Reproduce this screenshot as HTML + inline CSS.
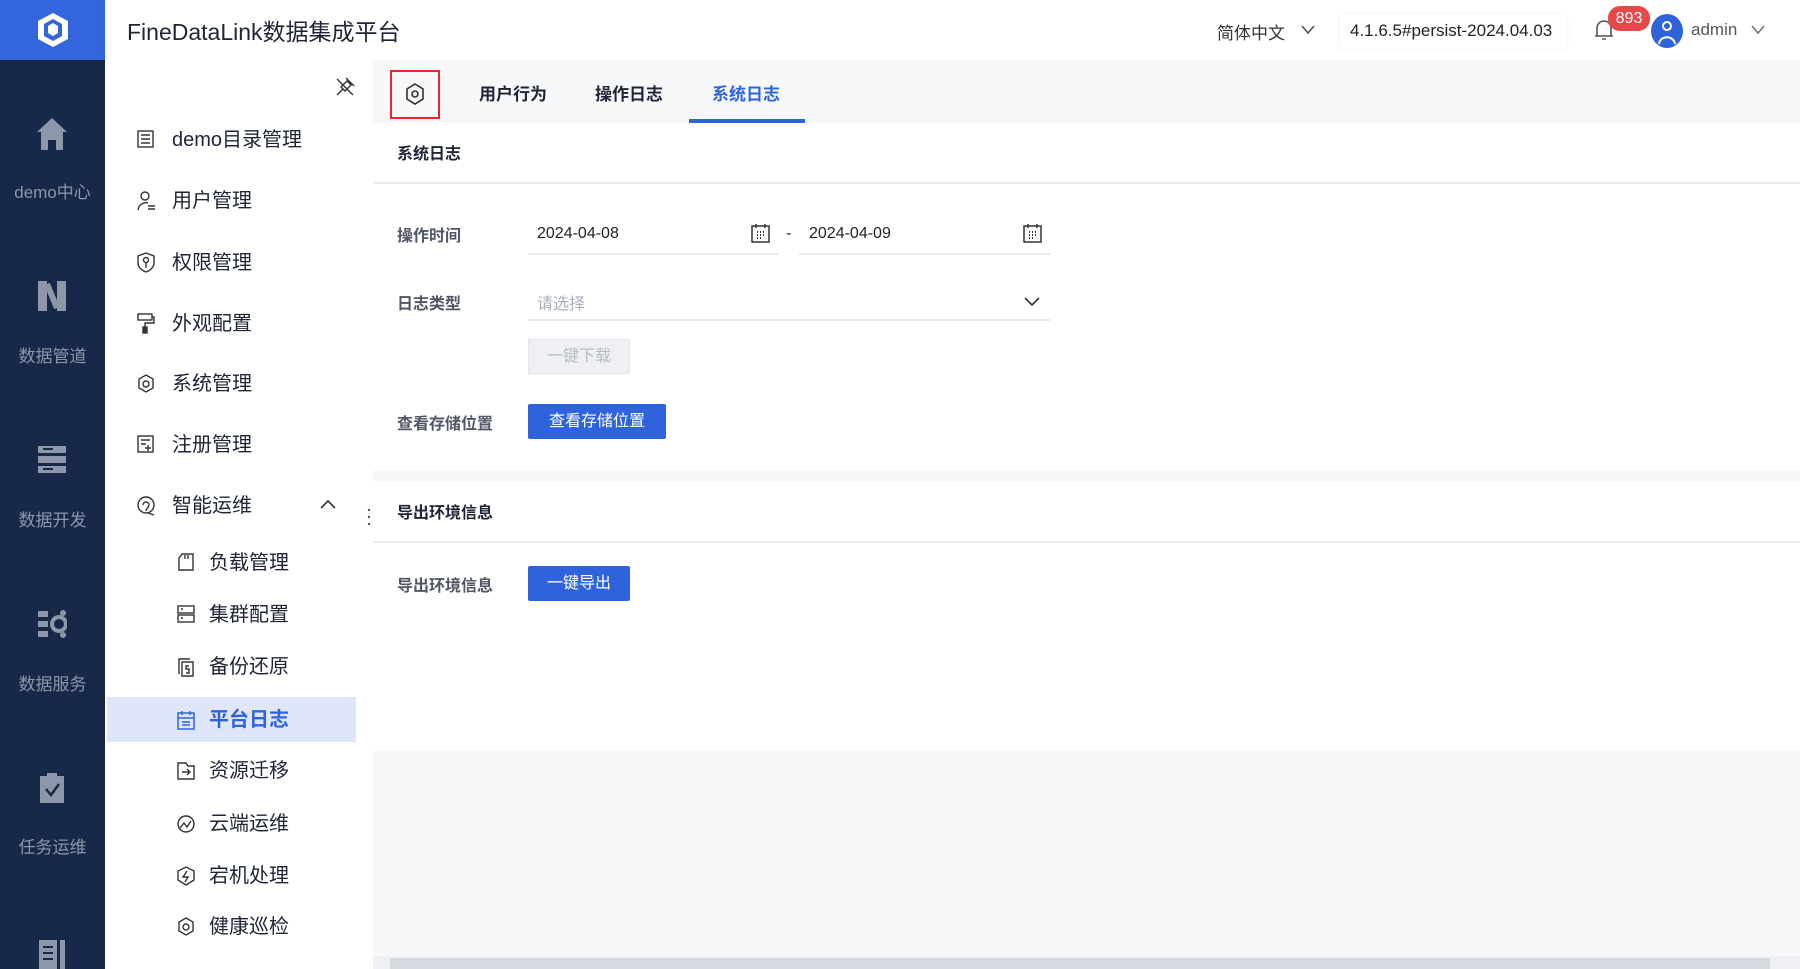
<!DOCTYPE html>
<html><head><meta charset="utf-8"><style>
*{margin:0;padding:0;box-sizing:border-box}
body{width:1800px;height:969px;overflow:hidden;background:#f7f8fa;font-family:"Liberation Sans","Noto Sans CJK SC",sans-serif;position:relative;color:#1d2536}
.abs{position:absolute}
.side{left:0;top:0;width:105px;height:969px;background:#172849}
.logo{left:0;top:0;width:105px;height:60px;background:#3366dd;display:flex;align-items:center;justify-content:center}
.hdr{left:105px;top:0;width:1695px;height:60px;background:#fff;box-shadow:0 2px 4px rgba(0,0,0,.04)}
.nl{color:#8d96a8;font-size:17px;width:105px;text-align:center}
.nav2{left:105px;top:60px;width:268px;height:909px;background:#fff}
.it{font-size:20px;color:#1d2536;line-height:24px}
.tabs{left:373px;top:60px;width:1427px;height:63px;background:#f7f8fa}
.tab{font-size:17px;font-weight:bold;top:80px}
.lbl{font-size:16px;color:#4f5666;font-weight:bold}
.ttl{font-size:16px;font-weight:bold;color:#1d2536}
.btn{background:#2f63dc;color:#fff;font-size:16px;text-align:center;border-radius:2px}
</style></head><body>
<div class="abs side"></div>
<div class="abs logo"><svg width="36" height="38" viewBox="0 0 36 38"><path d="M18 2 L33 10 V28 L18 36 L3 28 V10Z" fill="#fff"/><path d="M18 8 L27 13 V25 L18 30 L9 25 V13Z" fill="#3366dd"/><path d="M18 12 L23 15 V22 L18 25 L13 22 V15Z" fill="#fff"/></svg></div>
<svg class="abs" style="left:36px;top:116px" width="32" height="36" viewBox="0 0 32 36"><path d="M16 2 L31 16 H27 V34 H20 V24 H12 V34 H5 V16 H1Z" fill="#8e97a9"/></svg>
<div class="abs nl" style="top:178px">demo中心</div>
<svg class="abs" style="left:37px;top:280px" width="30" height="32"><rect x="1" y="1" width="9" height="30" fill="#8e97a9"/><rect x="20" y="1" width="9" height="30" fill="#8e97a9"/><path d="M10 4 L20 28" stroke="#8e97a9" stroke-width="6"/></svg>
<div class="abs nl" style="top:342px">数据管道</div>
<svg class="abs" style="left:37px;top:445px" width="30" height="28"><rect x="1" y="1" width="28" height="7" fill="#8e97a9"/><rect x="1" y="11" width="28" height="7" fill="#8e97a9"/><rect x="1" y="21" width="28" height="7" fill="#8e97a9"/><rect x="6" y="3" width="10" height="2" fill="#172849"/><rect x="6" y="23" width="10" height="2" fill="#172849"/></svg>
<div class="abs nl" style="top:506px">数据开发</div>
<svg class="abs" style="left:37px;top:609px" width="30" height="30"><rect x="1" y="2" width="10" height="6" fill="#8e97a9"/><rect x="1" y="12" width="10" height="6" fill="#8e97a9"/><rect x="1" y="22" width="10" height="6" fill="#8e97a9"/><circle cx="22" cy="15" r="7" fill="none" stroke="#8e97a9" stroke-width="4"/><circle cx="26" cy="4" r="3" fill="#8e97a9"/><circle cx="26" cy="26" r="3" fill="#8e97a9"/></svg>
<div class="abs nl" style="top:670px">数据服务</div>
<svg class="abs" style="left:39px;top:772px" width="26" height="32"><rect x="1" y="4" width="24" height="27" fill="#8e97a9"/><rect x="8" y="1" width="10" height="6" fill="#8e97a9"/><path d="M7 17 L12 23 L20 12" stroke="#172849" stroke-width="2.5" fill="none"/></svg>
<div class="abs nl" style="top:833px">任务运维</div>
<svg class="abs" style="left:38px;top:938px" width="30" height="31"><rect x="1" y="2" width="18" height="29" fill="#8e97a9"/><rect x="22" y="2" width="5" height="29" fill="#8e97a9"/><rect x="5" y="8" width="10" height="2" fill="#172849"/><rect x="5" y="14" width="10" height="2" fill="#172849"/><rect x="5" y="20" width="10" height="2" fill="#172849"/></svg>
<div class="abs hdr"></div>
<div class="abs" style="left:127px;top:13px;font-size:23px;color:#1d2536">FineDataLink数据集成平台</div>
<div class="abs" style="left:1217px;top:19px;font-size:17px;color:#333">简体中文</div>
<svg class="abs" style="left:1301px;top:25px" width="14" height="10"><path d="M1 1 L7 8 L13 1" stroke="#555" stroke-width="1.6" fill="none"/></svg>
<div class="abs" style="left:1340px;top:14px;width:226px;height:34px;background:#fff;box-shadow:0 0 6px rgba(0,0,0,.06)"></div>
<div class="abs" style="left:1350px;top:21px;font-size:17px;color:#222">4.1.6.5#persist-2024.04.03</div>
<svg class="abs" style="left:1593px;top:18px" width="22" height="24"><path d="M4 18 V10 a7 7 0 0 1 14 0 V18 Z M2 18 H20 M9 21 H13" stroke="#555" stroke-width="1.6" fill="none"/></svg>
<div class="abs" style="left:1608px;top:6px;width:42px;height:25px;background:#e9484a;border-radius:12px;color:#fff;font-size:16px;text-align:center;line-height:25px">893</div>
<div class="abs" style="left:1651px;top:14px;width:32px;height:34px;border-radius:50%;background:#2f63dc"></div>
<svg class="abs" style="left:1655px;top:18px" width="24" height="28"><circle cx="12" cy="8" r="4" stroke="#fff" stroke-width="2" fill="none"/><path d="M4 26 C5 17 19 17 20 26" stroke="#fff" stroke-width="2" fill="none"/></svg>
<div class="abs" style="left:1691px;top:20px;font-size:17px;color:#555">admin</div>
<svg class="abs" style="left:1751px;top:25px" width="14" height="10"><path d="M1 1 L7 8 L13 1" stroke="#777" stroke-width="1.6" fill="none"/></svg>
<div class="abs nav2"></div>
<svg class="abs" style="left:334px;top:76px" width="22" height="22"><path d="M13 5 L17 9 L11 15 L7 11Z" stroke="#333" stroke-width="1.4" fill="none"/><path d="M12 2 L20 10 M9 13 L3 19" stroke="#333" stroke-width="1.5" fill="none"/><path d="M3 3 L19 19" stroke="#333" stroke-width="1.4"/></svg>
<div class="abs" style="left:107px;top:697px;width:249px;height:45px;background:#dfe6fa"></div>
<div class="abs it" style="left:172px;top:128px">demo目录管理</div>
<div class="abs it" style="left:172px;top:189px">用户管理</div>
<div class="abs it" style="left:172px;top:251px">权限管理</div>
<div class="abs it" style="left:172px;top:312px">外观配置</div>
<div class="abs it" style="left:172px;top:372px">系统管理</div>
<div class="abs it" style="left:172px;top:433px">注册管理</div>
<div class="abs it" style="left:172px;top:494px">智能运维</div>
<svg class="abs" style="left:320px;top:499px" width="16" height="10"><path d="M1 9 L8 2 L15 9" stroke="#333" stroke-width="1.6" fill="none"/></svg>
<svg class="abs" style="left:136px;top:129px" width="20" height="20" fill="none" stroke="#333" stroke-width="1.4"><rect x="2" y="2" width="15" height="16"/><path d="M5 6h9M5 10h9M5 14h9"/></svg>
<svg class="abs" style="left:136px;top:190px" width="20" height="22" fill="none" stroke="#333" stroke-width="1.4"><circle cx="9" cy="6" r="4"/><path d="M2 20 C3 13 10 12 12 13 M12 16h7M12 19h7"/></svg>
<svg class="abs" style="left:136px;top:251px" width="20" height="22" fill="none" stroke="#333" stroke-width="1.4"><path d="M10 2 L18 5 V12 C18 17 13 20 10 21 C7 20 2 17 2 12 V5Z"/><circle cx="10" cy="9" r="2.5"/><path d="M10 12v5"/></svg>
<svg class="abs" style="left:136px;top:312px" width="20" height="22" fill="none" stroke="#333" stroke-width="1.4"><rect x="2" y="2" width="14" height="6"/><path d="M16 5h2v6H9v4"/><rect x="7" y="15" width="4" height="6" fill="#333"/></svg>
<svg class="abs" style="left:136px;top:373px" width="20" height="22" fill="none" stroke="#333" stroke-width="1.4"><path d="M10 2 L17 6 V15 L10 19 L3 15 V6Z"/><circle cx="10" cy="11" r="3"/></svg>
<svg class="abs" style="left:136px;top:434px" width="20" height="20" fill="none" stroke="#333" stroke-width="1.4"><rect x="2" y="2" width="15" height="16"/><path d="M5 6h9M5 10h5M9 14h6M12 11v6"/></svg>
<svg class="abs" style="left:136px;top:495px" width="20" height="22" fill="none" stroke="#333" stroke-width="1.4"><circle cx="10" cy="10" r="8"/><path d="M7 10 a3 3 0 0 1 6 0 c0 3 -3 3 -3 6 M12 18 L18 20"/></svg>
<div class="abs it" style="left:209px;top:551px">负载管理</div>
<div class="abs it" style="left:209px;top:603px">集群配置</div>
<div class="abs it" style="left:209px;top:655px">备份还原</div>
<div class="abs it" style="left:209px;top:708px;color:#2f63dc;font-weight:bold">平台日志</div>
<div class="abs it" style="left:209px;top:759px">资源迁移</div>
<div class="abs it" style="left:209px;top:812px">云端运维</div>
<div class="abs it" style="left:209px;top:864px">宕机处理</div>
<div class="abs it" style="left:209px;top:915px">健康巡检</div>
<svg class="abs" style="left:176px;top:552px" width="20" height="20" fill="none" stroke="#333" stroke-width="1.4"><path d="M3 18 V6 L6 2 H17 V18Z M9 3v4M12 3v4"/></svg>
<svg class="abs" style="left:176px;top:604px" width="20" height="20" fill="none" stroke="#333" stroke-width="1.4"><rect x="2" y="2" width="16" height="7"/><rect x="2" y="11" width="16" height="7"/><path d="M5 5h2M5 14h2"/></svg>
<svg class="abs" style="left:176px;top:656px" width="20" height="22" fill="none" stroke="#333" stroke-width="1.4"><path d="M3 18 V3 H14 M6 20 V6 H17 V20Z"/><path d="M13 10h-3v3h3v4h-3"/></svg>
<svg class="abs" style="left:176px;top:709px" width="20" height="22" fill="none" stroke="#2f63dc" stroke-width="1.5"><rect x="2" y="4" width="16" height="16"/><path d="M6 2v4M14 2v4M2 9h16M6 13h8M6 16h8"/></svg>
<svg class="abs" style="left:176px;top:760px" width="20" height="22" fill="none" stroke="#333" stroke-width="1.4"><path d="M2 3 H10 L12 6 H18 V19 H2Z M6 12h8M11 9l3 3-3 3"/></svg>
<svg class="abs" style="left:176px;top:813px" width="20" height="22" fill="none" stroke="#333" stroke-width="1.4"><circle cx="10" cy="11" r="8"/><path d="M4 15 L8 10 L11 14 L15 8"/></svg>
<svg class="abs" style="left:176px;top:865px" width="20" height="22" fill="none" stroke="#333" stroke-width="1.4"><path d="M10 2 L18 6 V15 L10 20 L2 15 V6Z"/><path d="M11 6 L7 12 H12 L9 17"/></svg>
<svg class="abs" style="left:176px;top:916px" width="20" height="22" fill="none" stroke="#333" stroke-width="1.4"><path d="M10 2 L17 6 V15 L10 19 L3 15 V6Z"/><circle cx="10" cy="11" r="3"/></svg>
<svg class="abs" style="left:366px;top:507px" width="12" height="20" fill="#555"><circle cx="3" cy="3" r="1.2"/><circle cx="9" cy="3" r="1.2"/><circle cx="3" cy="10" r="1.2"/><circle cx="9" cy="10" r="1.2"/><circle cx="3" cy="17" r="1.2"/><circle cx="9" cy="17" r="1.2"/></svg>
<div class="abs tabs"></div>
<div class="abs" style="left:390px;top:70px;width:50px;height:49px;border:2px solid #e8262c"></div>
<svg class="abs" style="left:403px;top:82px" width="24" height="24" fill="none" stroke="#333" stroke-width="1.6"><path d="M12 2 L20 7 V17 L12 22 L4 17 V7Z"/><circle cx="12" cy="12" r="3"/></svg>
<div class="abs tab" style="left:479px">用户行为</div>
<div class="abs tab" style="left:595px">操作日志</div>
<div class="abs tab" style="left:712px;color:#2f63dc">系统日志</div>
<div class="abs" style="left:689px;top:119px;width:116px;height:4px;background:#2f63dc"></div>
<div class="abs" style="left:373px;top:123px;width:1427px;height:347px;background:#fff"></div>
<div class="abs ttl" style="left:397px;top:140px">系统日志</div>
<div class="abs" style="left:373px;top:182px;width:1427px;height:2px;background:#e8eaee"></div>
<div class="abs lbl" style="left:397px;top:222px">操作时间</div>
<div class="abs" style="left:537px;top:225px;font-size:16px;color:#222">2024-04-08</div>
<div class="abs" style="left:528px;top:253px;width:250px;height:2px;background:#e8eaee"></div>
<div class="abs" style="left:786px;top:225px;font-size:16px">-</div>
<div class="abs" style="left:809px;top:225px;font-size:16px;color:#222">2024-04-09</div>
<div class="abs" style="left:799px;top:253px;width:251px;height:2px;background:#e8eaee"></div>
<svg class="abs" style="left:750px;top:222px" width="22" height="22" fill="none" stroke="#333" stroke-width="1.5"><rect x="2" y="4" width="17" height="16"/><path d="M6 2v4M15 2v4"/><path d="M7 10h1M10 10h1M13 10h1M7 13h1M10 13h1M13 13h1M7 16h1M10 16h1" stroke-width="2"/></svg>
<svg class="abs" style="left:1022px;top:222px" width="22" height="22" fill="none" stroke="#333" stroke-width="1.5"><rect x="2" y="4" width="17" height="16"/><path d="M6 2v4M15 2v4"/><path d="M7 10h1M10 10h1M13 10h1M7 13h1M10 13h1M13 13h1M7 16h1M10 16h1" stroke-width="2"/></svg>
<div class="abs lbl" style="left:397px;top:290px">日志类型</div>
<div class="abs" style="left:537px;top:290px;font-size:16px;color:#aab0bb">请选择</div>
<svg class="abs" style="left:1024px;top:297px" width="16" height="10"><path d="M1 1 L8 8 L15 1" stroke="#333" stroke-width="1.6" fill="none"/></svg>
<div class="abs" style="left:528px;top:319px;width:522px;height:2px;background:#e8eaee"></div>
<div class="abs" style="left:528px;top:339px;width:102px;height:35px;background:#eef0f3;border:1px solid #e2e4e8;color:#b8bcc5;font-size:16px;text-align:center;line-height:33px">一键下载</div>
<div class="abs lbl" style="left:397px;top:410px">查看存储位置</div>
<div class="abs btn" style="left:528px;top:404px;width:138px;height:35px;line-height:35px">查看存储位置</div>
<div class="abs" style="left:373px;top:481px;width:1427px;height:270px;background:#fff"></div>
<div class="abs ttl" style="left:397px;top:499px">导出环境信息</div>
<div class="abs" style="left:373px;top:541px;width:1427px;height:2px;background:#e8eaee"></div>
<div class="abs lbl" style="left:397px;top:572px">导出环境信息</div>
<div class="abs btn" style="left:528px;top:566px;width:102px;height:35px;line-height:35px">一键导出</div>
<div class="abs" style="left:373px;top:956px;width:1427px;height:13px;background:#eef0f3"></div>
<div class="abs" style="left:390px;top:958px;width:1380px;height:11px;background:#d5d9e0"></div>
</body></html>
